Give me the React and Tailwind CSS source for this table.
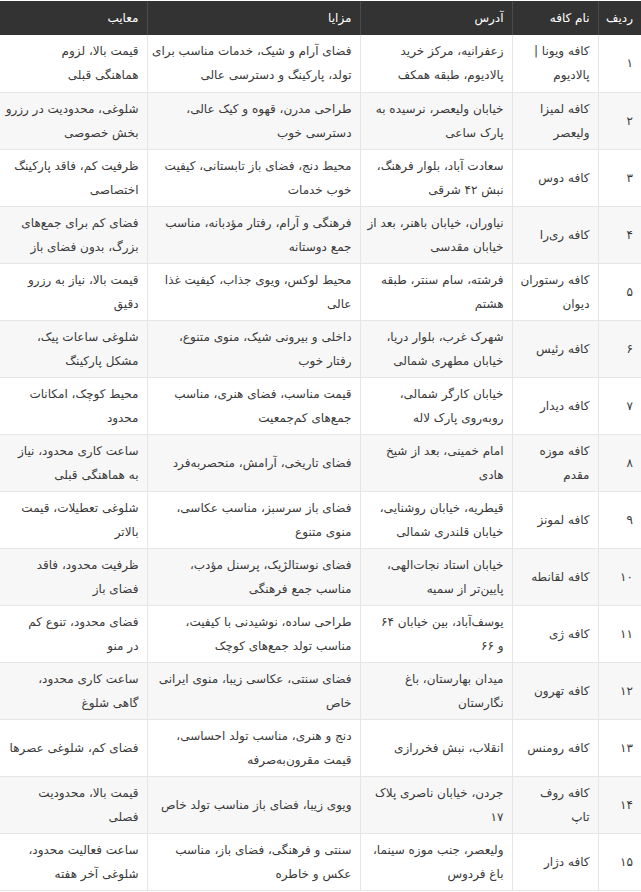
const rows = [
  ['۱', ['کافه ویونا |', 'پالادیوم'], ['زعفرانیه، مرکز خرید', 'پالادیوم، طبقه همکف'], ['فضای آرام و شیک، خدمات مناسب برای', 'تولد، پارکینگ و دسترسی عالی'], ['قیمت بالا، لزوم', 'هماهنگی قبلی']],
  ['۲', ['کافه لمیزا', 'ولیعصر'], ['خیابان ولیعصر، نرسیده به', 'پارک ساعی'], ['طراحی مدرن، قهوه و کیک عالی،', 'دسترسی خوب'], ['شلوغی، محدودیت در رزرو', 'بخش خصوصی']],
  ['۳', ['کافه دوس'], ['سعادت آباد، بلوار فرهنگ،', 'نبش ۴۲ شرقی'], ['محیط دنج، فضای باز تابستانی، کیفیت', 'خوب خدمات'], ['ظرفیت کم، فاقد پارکینگ', 'اختصاصی']],
  ['۴', ['کافه ری‌را'], ['نیاوران، خیابان باهنر، بعد از', 'خیابان مقدسی'], ['فرهنگی و آرام، رفتار مؤدبانه، مناسب', 'جمع دوستانه'], ['فضای کم برای جمع‌های', 'بزرگ، بدون فضای باز']],
  ['۵', ['کافه رستوران', 'دیوان'], ['فرشته، سام سنتر، طبقه', 'هشتم'], ['محیط لوکس، ویوی جذاب، کیفیت غذا', 'عالی'], ['قیمت بالا، نیاز به رزرو', 'دقیق']],
  ['۶', ['کافه رئیس'], ['شهرک غرب، بلوار دریا،', 'خیابان مطهری شمالی'], ['داخلی و بیرونی شیک، منوی متنوع،', 'رفتار خوب'], ['شلوغی ساعات پیک،', 'مشکل پارکینگ']],
  ['۷', ['کافه دیدار'], ['خیابان کارگر شمالی،', 'روبه‌روی پارک لاله'], ['قیمت مناسب، فضای هنری، مناسب', 'جمع‌های کم‌جمعیت'], ['محیط کوچک، امکانات', 'محدود']],
  ['۸', ['کافه موزه', 'مقدم'], ['امام خمینی، بعد از شیخ', 'هادی'], ['فضای تاریخی، آرامش، منحصربه‌فرد'], ['ساعت کاری محدود، نیاز', 'به هماهنگی قبلی']],
  ['۹', ['کافه لمونز'], ['قیطریه، خیابان روشنایی،', 'خیابان قلندری شمالی'], ['فضای باز سرسبز، مناسب عکاسی،', 'منوی متنوع'], ['شلوغی تعطیلات، قیمت', 'بالاتر']],
  ['۱۰', ['کافه لقانطه'], ['خیابان استاد نجات‌الهی،', 'پایین‌تر از سمیه'], ['فضای نوستالژیک، پرسنل مؤدب،', 'مناسب جمع فرهنگی'], ['ظرفیت محدود، فاقد', 'فضای باز']],
  ['۱۱', ['کافه ژی'], ['یوسف‌آباد، بین خیابان ۶۴', 'و ۶۶'], ['طراحی ساده، نوشیدنی با کیفیت،', 'مناسب تولد جمع‌های کوچک'], ['فضای محدود، تنوع کم', 'در منو']],
  ['۱۲', ['کافه تهرون'], ['میدان بهارستان، باغ', 'نگارستان'], ['فضای سنتی، عکاسی زیبا، منوی ایرانی', 'خاص'], ['ساعت کاری محدود،', 'گاهی شلوغ']],
  ['۱۳', ['کافه رومنس'], ['انقلاب، نبش فخررازی'], ['دنج و هنری، مناسب تولد احساسی،', 'قیمت مقرون‌به‌صرفه'], ['فضای کم، شلوغی عصرها']],
  ['۱۴', ['کافه روف', 'تاپ'], ['جردن، خیابان ناصری پلاک', '۱۷'], ['ویوی زیبا، فضای باز مناسب تولد خاص'], ['قیمت بالا، محدودیت', 'فصلی']],
  ['۱۵', ['کافه دژار'], ['ولیعصر، جنب موزه سینما،', 'باغ فردوس'], ['سنتی و فرهنگی، فضای باز، مناسب', 'عکس و خاطره'], ['ساعت فعالیت محدود،', 'شلوغی آخر هفته']],
];

const headers = ['ردیف', 'نام کافه', 'آدرس', 'مزایا', 'معایب'];

function Lines({ lines }) {
  return (
    <div className="flex flex-col">
      {lines.map((l, i) => (
        <span key={i} className="whitespace-nowrap">{l}</span>
      ))}
    </div>
  );
}

export default function App() {
  return (
    <div className="w-[641px] bg-white pt-px" dir="rtl" style={{ fontFamily: '"DejaVu Sans", sans-serif' }}>
      <table className="w-full table-fixed border-collapse text-[12px] leading-[24px] text-[#3a3a3a]">
        <colgroup>
          <col className="w-[43px]" />
          <col className="w-[86px]" />
          <col className="w-[152px]" />
          <col className="w-[213px]" />
          <col className="w-[147px]" />
        </colgroup>
        <thead>
          <tr className="bg-[#333333] text-white">
            {headers.map((h, i) => (
              <th key={h} className={`h-[34px] px-2 text-right font-normal ${i < headers.length - 1 ? 'border-l border-[#4a4a4a]' : ''}`}>
                {h}
              </th>
            ))}
          </tr>
        </thead>
        <tbody>
          {rows.map((r, idx) => (
            <tr key={idx} className={`${idx % 2 === 1 ? 'bg-[#f7f7f7]' : 'bg-white'} h-[57px]`}>
              <td className="border-b border-l border-[#e6e6e6] px-2 align-middle">{r[0]}</td>
              <td className="border-b border-l border-[#e6e6e6] px-2 align-middle"><Lines lines={r[1]} /></td>
              <td className="border-b border-l border-[#e6e6e6] px-2 align-middle"><Lines lines={r[2]} /></td>
              <td className="border-b border-l border-[#e6e6e6] px-2 align-middle"><Lines lines={r[3]} /></td>
              <td className="border-b border-[#e6e6e6] px-2 align-middle"><Lines lines={r[4]} /></td>
            </tr>
          ))}
        </tbody>
      </table>
    </div>
  );
}
